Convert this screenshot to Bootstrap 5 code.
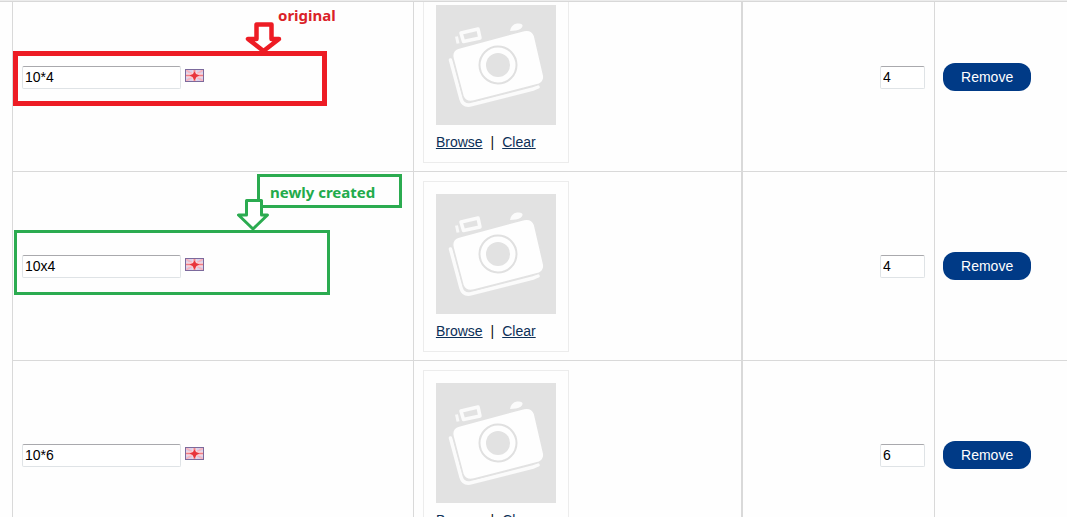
<!DOCTYPE html>
<html lang="en">
<head>
<meta charset="utf-8">
<meta name="viewport" content="width=device-width, initial-scale=1">
<title>Option values</title>
<link href="https://cdn.jsdelivr.net/npm/bootstrap@5.3.0/dist/css/bootstrap.min.css" rel="stylesheet">
<style>
  body { font-family: "Liberation Sans", Arial, sans-serif; font-size: 14px; line-height: 20px; color: #111; background: #fefefe; }
  .pane-edge { border-top: 1px solid #ececec; }
  .pane { padding-left: 12px; border-top: 1px solid #d8d8d8; }
  /* the list is scrolled part of the way into its first row */
  .values { margin-top: -19px; table-layout: fixed; border-collapse: separate; border-spacing: 0; }
  .values td { padding: 9px 9px 8px; border-left: 1px solid #d9d9d9; border-bottom: 1px solid #d9d9d9; }
  .values td.qty { border-left-width: 2px; }
  .values td.action { padding: 8px 8px 9px; }
  .c-name { width: 38%; }
  .c-image { width: 31.1%; }
  .c-qty { width: 18.3%; }
  .field { height: 23px; padding: 0 2px 2px; color: #000; background: #fff; border: 1px solid #dfe3e6; border-top-color: #a9a9ad; border-radius: 2px; }
  .field-name { width: 159px; }
  .field-qty { width: 45px; }
  .thumb { width: 146px; padding: 12px 12px 10px; border: 1px solid #ececec; }
  .thumb a { color: #0c2f57; }
  .thumb-links { margin-top: 7px; gap: 8px; }
  .btn-remove { height: 28px; padding: 0 18px; font-size: 14px; line-height: 28px; color: #fff; background: #003a86; border: 0; border-radius: 12px; }
  .btn-remove:hover { color: #fff; background: #002d6b; }
  .note { pointer-events: none; font: bold 15px/20px "Noto Sans", sans-serif; }
  .note-red { color: #da2128; }
  .note-green { color: #22ab4b; }
  .frame-red { left: 0; top: 68px; width: 314px; height: 55px; border: 5px solid #ed1c24; }
  .text-red { left: 265px; top: 22px; }
  .arrow-red { left: 232px; top: 38px; }
  .frame-green { left: 1px; top: 58px; width: 316px; height: 65px; border: 3px solid #2bab50; }
  .text-green { left: 244px; top: 2px; width: 145px; height: 34px; padding: 5px 10px; border: 3px solid #2bab50; }
  .arrow-green { left: 224px; top: 26px; }
</style>
</head>
<body>
<svg class="d-none" aria-hidden="true">
  <symbol id="camera" viewBox="0 0 120 120">
    <rect width="120" height="120" fill="#e2e2e2"/>
    <path d="M14.500 55 L25 94 Q27 101 34 100 L97 84 Q101 82.500 102 82" fill="none" stroke="#fbfbfb" stroke-width="3.500" stroke-linecap="round"/>
    <path d="M20.500 31.500 L22 38.500" stroke="#f8f8f8" stroke-width="3" fill="none"/>
    <path d="M25 28 L42 24 L44 33 L27.500 36.500Z" fill="none" stroke="#fbfbfb" stroke-width="3.500" stroke-linejoin="round"/>
    <path d="M74 26 Q75 19.500 81 18.500 Q87 18 86.500 21 Q86 24 80 25.500Z" fill="#fbfbfb"/>
    <path d="M23 43 L88 25.500 Q96 24 98.500 31 L107.500 70 Q109 77 102 79.500 L38 96 Q29.500 98 27 91 L17 53 Q15.500 45 23 43Z" fill="#fefefe" stroke="#e2e2e2" stroke-width="1.300"/>
    <circle cx="62" cy="60" r="18.500" fill="none" stroke="#e0e0e0" stroke-width="2"/>
    <circle cx="62" cy="60" r="12" fill="#e2e2e2"/>
  </symbol>
  <symbol id="flag" viewBox="0 0 19 13">
    <rect width="19" height="13" fill="#d9d2ec"/>
    <path d="M1 1 L18 12 M18 1 L1 12" stroke="#f6b5c0" stroke-width="2"/>
    <path d="M9.500 0V13 M0 6.500H19" stroke="#fad9e0" stroke-width="4"/>
    <path d="M9.500 1V12" stroke="#f08c94" stroke-width="2"/>
    <path d="M1 6.500H18" stroke="#f07c84" stroke-width="1.500"/>
    <path d="M9.500 2.500 L11 5 L14.500 6.500 L11.500 8 L9.500 11.500 L7.500 8 L4.500 6.500 L8 5Z" fill="#e8343c"/>
    <rect x=".5" y=".5" width="18" height="12" fill="none" stroke="#7c6a9c"/>
  </symbol>
</svg>
<div class="pane-edge vh-100 overflow-hidden">
  <div class="pane h-100 overflow-hidden">
    <table class="values w-100">
      <colgroup><col class="c-name"><col class="c-image"><col class="c-qty"><col></colgroup>
      <tbody>
        <tr>
          <td class="position-relative">
            <div class="d-flex align-items-center gap-1">
              <input class="field field-name" type="text" value="10*4" aria-label="Option value name">
              <svg class="mb-1" width="19" height="13" role="img" aria-label="English"><use href="#flag"/></svg>
            </div>
            <div class="note frame-red position-absolute"></div>
            <svg class="note arrow-red position-absolute" width="37" height="34" viewBox="0 0 37 34" fill="#fff" stroke="#ed1c24" stroke-width="4.500" stroke-linejoin="round"><path d="M11.500 3.500H26.500V18H34L18.500 30L3 18H11.500Z"/></svg>
            <div class="note note-red text-red position-absolute">original</div>
          </td>
          <td>
            <div class="thumb">
              <svg class="d-block" width="120" height="120" role="img" aria-label="No image"><use href="#camera"/></svg>
              <div class="thumb-links d-flex"><a href="#">Browse</a><span>|</span><a href="#">Clear</a></div>
            </div>
          </td>
          <td class="qty text-end"><input class="field field-qty" type="text" value="4" aria-label="Sort order"></td>
          <td class="action"><button class="btn btn-remove" type="button">Remove</button></td>
        </tr>
        <tr>
          <td class="position-relative">
            <div class="d-flex align-items-center gap-1">
              <input class="field field-name" type="text" value="10x4" aria-label="Option value name">
              <svg class="mb-1" width="19" height="13" role="img" aria-label="English"><use href="#flag"/></svg>
            </div>
            <div class="note frame-green position-absolute"></div>
            <div class="note note-green text-green position-absolute">newly created</div>
            <svg class="note arrow-green position-absolute" width="32" height="34" viewBox="0 0 32 34" fill="#fff" stroke="#2bab50" stroke-width="3" stroke-linejoin="round"><path d="M9.500 2.500H24.500V17H30.500L16 31L1.500 17H9.500Z"/></svg>
          </td>
          <td>
            <div class="thumb">
              <svg class="d-block" width="120" height="120" role="img" aria-label="No image"><use href="#camera"/></svg>
              <div class="thumb-links d-flex"><a href="#">Browse</a><span>|</span><a href="#">Clear</a></div>
            </div>
          </td>
          <td class="qty text-end"><input class="field field-qty" type="text" value="4" aria-label="Sort order"></td>
          <td class="action"><button class="btn btn-remove" type="button">Remove</button></td>
        </tr>
        <tr>
          <td>
            <div class="d-flex align-items-center gap-1">
              <input class="field field-name" type="text" value="10*6" aria-label="Option value name">
              <svg class="mb-1" width="19" height="13" role="img" aria-label="English"><use href="#flag"/></svg>
            </div>
          </td>
          <td>
            <div class="thumb">
              <svg class="d-block" width="120" height="120" role="img" aria-label="No image"><use href="#camera"/></svg>
              <div class="thumb-links d-flex"><a href="#">Browse</a><span>|</span><a href="#">Clear</a></div>
            </div>
          </td>
          <td class="qty text-end"><input class="field field-qty" type="text" value="6" aria-label="Sort order"></td>
          <td class="action"><button class="btn btn-remove" type="button">Remove</button></td>
        </tr>
      </tbody>
    </table>
  </div>
</div>
<script src="https://cdn.jsdelivr.net/npm/bootstrap@5.3.0/dist/js/bootstrap.bundle.min.js"></script>
</body>
</html>
